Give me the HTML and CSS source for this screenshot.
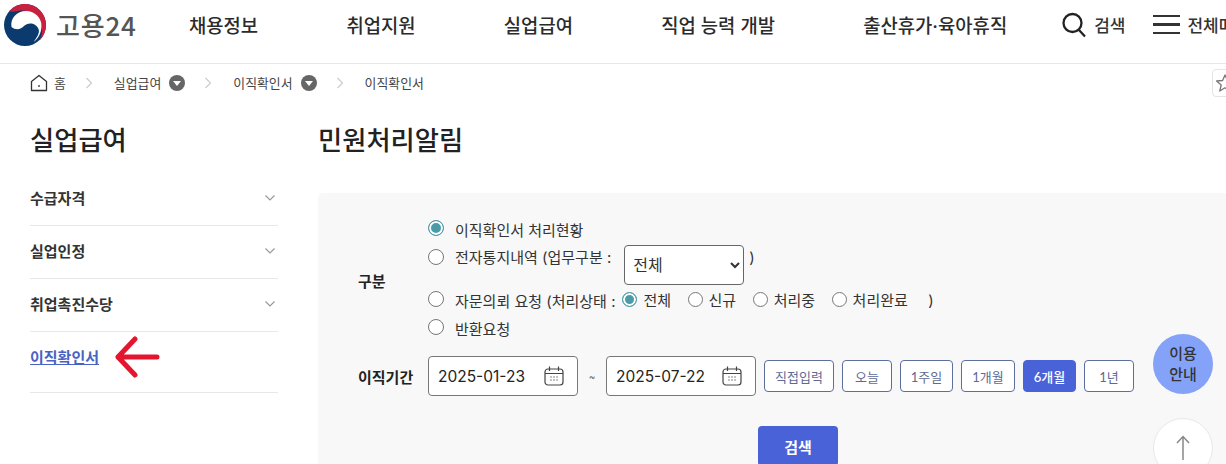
FILE: index.html
```html
<!DOCTYPE html>
<html lang="ko">
<head>
    <title>고용24</title>
    <link rel="stylesheet" href="styles.css">
</head>
<body>
    <div class="page">
        <header class="top">
            <a class="logo">
                <svg width="44" height="44" viewBox="0 0 44 44">
                    <circle cx="22" cy="22" r="21" fill="#0b3a6f"/>
                    <path d="M6.500 8C10.500 3.500 16 1 22 1C33.600 1 43 10.400 43 22C43 28 40.500 33.500 36.500 37.500C39.500 32 40 25.500 37.500 19.500C34 11.500 26 7 18 7.500C13.500 8 9.500 9.500 6.500 8Z" fill="#c8213f"/>
                    <path d="M8.500 24C7 15 14 8 23 8C32 8 38.500 15 38.500 23C38.500 30 35 36 30.500 39C34 34 37 30 35.500 26C33.500 20 25 18.500 21 23C18 26.500 13 27.500 8.500 24Z" fill="#fff"/>
                </svg>
                <span class="logo-text">고용24</span>
            </a>
            <nav class="gnb">
                <a>채용정보</a>
                <a>취업지원</a>
                <a>실업급여</a>
                <a>직업 능력 개발</a>
                <a>출산휴가·육아휴직</a>
            </nav>
            <div class="util">
                <a class="util-search">
                    <svg width="24" height="26" viewBox="0 0 24 26" fill="none" stroke="#222" stroke-width="2.300">
                        <circle cx="10.500" cy="11" r="9"/>
                        <path d="M17 18L23 24.500"/>
                    </svg>
                    검색
                </a>
                <a class="util-menu">
                    <span class="burger"><i></i><i></i><i></i></span>
                    전체메뉴
                </a>
            </div>
        </header>

        <div class="crumbs">
            <svg width="18" height="18" viewBox="0 0 18 18" fill="none" stroke="#333" stroke-width="1.300">
                <path d="M1.500 7.500L9 1.500L16.500 7.500V16.500H1.500Z" stroke-linejoin="round"/>
                <path d="M9 11V13"/>
            </svg>
            <span class="crumb crumb-home">홈</span>
            <svg class="chev" width="8" height="12" viewBox="0 0 8 12" fill="none" stroke="#ccc" stroke-width="1.200"><path d="M1.500 1L6.500 6L1.500 11"/></svg>
            <span class="crumb">실업급여</span>
            <span class="dot"></span>
            <svg class="chev" width="8" height="12" viewBox="0 0 8 12" fill="none" stroke="#ccc" stroke-width="1.200"><path d="M1.500 1L6.500 6L1.500 11"/></svg>
            <span class="crumb">이직확인서</span>
            <span class="dot"></span>
            <svg class="chev" width="8" height="12" viewBox="0 0 8 12" fill="none" stroke="#ccc" stroke-width="1.200"><path d="M1.500 1L6.500 6L1.500 11"/></svg>
            <span class="crumb">이직확인서</span>
            <span class="fav">
                <svg width="20" height="20" viewBox="0 0 20 20" fill="none" stroke="#777" stroke-width="1.300"><path d="M10 2L12.400 7.500L18.400 8L13.800 12L15.200 18L10 14.800L4.800 18L6.200 12L1.600 8L7.600 7.500Z" stroke-linejoin="round"/></svg>
            </span>
        </div>

        <div class="content">
            <aside class="side">
                <h2>실업급여</h2>
                <ul class="side-list">
                    <li>수급자격<svg width="10" height="6" viewBox="0 0 10 6" fill="none" stroke="#999" stroke-width="1.200"><path d="M.5 .5L5 5L9.500 .5"/></svg></li>
                    <li>실업인정<svg width="10" height="6" viewBox="0 0 10 6" fill="none" stroke="#999" stroke-width="1.200"><path d="M.5 .5L5 5L9.500 .5"/></svg></li>
                    <li>취업촉진수당<svg width="10" height="6" viewBox="0 0 10 6" fill="none" stroke="#999" stroke-width="1.200"><path d="M.5 .5L5 5L9.500 .5"/></svg></li>
                    <li class="side-on">
                        <a>이직확인서</a>
                        <svg class="red-arrow" width="46" height="42" viewBox="0 0 46 42" fill="none" stroke="#e3152f" stroke-width="5" stroke-linecap="round" stroke-linejoin="round">
                            <path d="M43 21H4M21 3L4 21L21 39"/>
                        </svg>
                    </li>
                </ul>
            </aside>

            <main class="main">
                <h1>민원처리알림</h1>
                <form class="panel">
                    <div class="row row-type">
                        <div class="label">구분</div>
                        <div class="opts">
                            <div class="opt opt-1"><i class="radio on"></i>이직확인서 처리현황</div>
                            <div class="opt opt-2">
                                <i class="radio"></i><span class="opt-text">전자통지내역 (업무구분 :</span>
                                <select class="sel"><option>전체</option></select>
                                <span class="paren">)</span>
                            </div>
                            <div class="opt opt-3">
                                <i class="radio"></i><span class="opt-tight">자문의뢰 요청 (처리상태 :</span>
                                <i class="radio small on"></i><span class="sub">전체</span>
                                <i class="radio small"></i><span class="sub">신규</span>
                                <i class="radio small"></i><span class="sub">처리중</span>
                                <i class="radio small"></i><span class="sub">처리완료</span>
                                <span class="paren-2">)</span>
                            </div>
                            <div class="opt opt-4"><i class="radio"></i>반환요청</div>
                        </div>
                    </div>
                    <div class="row row-date">
                        <div class="label label-date">이직기간</div>
                        <div class="date">2025-01-23
                            <svg width="20" height="20" viewBox="0 0 20 20" fill="none" stroke="#444" stroke-width="1.200"><rect x="1" y="3" width="18" height="16" rx="3"/><path d="M1 7.500H19M5.500 .5V5M14.500 .5V5"/><path d="M6 11H8M9 11H11M12 11H14M6 14H8M9 14H11M12 14H14" stroke="#888"/></svg>
                        </div>
                        <span class="tilde">~</span>
                        <div class="date">2025-07-22
                            <svg width="20" height="20" viewBox="0 0 20 20" fill="none" stroke="#444" stroke-width="1.200"><rect x="1" y="3" width="18" height="16" rx="3"/><path d="M1 7.500H19M5.500 .5V5M14.500 .5V5"/><path d="M6 11H8M9 11H11M12 11H14M6 14H8M9 14H11M12 14H14" stroke="#888"/></svg>
                        </div>
                        <div class="quick">
                            <button type="button" class="w70">직접입력</button>
                            <button type="button" class="w50">오늘</button>
                            <button type="button" class="w53">1주일</button>
                            <button type="button" class="w54">1개월</button>
                            <button type="button" class="w53 active">6개월</button>
                            <button type="button" class="w50">1년</button>
                        </div>
                    </div>
                    <div class="row-btn"><button type="button" class="btn-search">검색</button></div>
                </form>
            </main>
        </div>

        <a class="float-guide">이용<br>안내</a>
        <a class="float-top">
            <svg width="14" height="26" viewBox="0 0 14 26" fill="none" stroke="#888" stroke-width="1.500"><path d="M7 25V1.500M1 8L7 1.500L13 8"/></svg>
        </a>
    </div>
</body>
</html>
```

FILE: styles.css
```css
* {
    box-sizing: border-box;
}

html, body {
    margin: 0;
    height: 464px;
    overflow: hidden;
    background-color: #fff;
}

body {
    font-family: Inter, "Noto Sans CJK KR", "Noto Sans", sans-serif;
    color: #222;
}

.page {
    position: relative;
    width: 1226px;
    height: 464px;
    overflow: hidden;
}

/* header */
.top {
    display: flex;
    align-items: center;
    height: 64px;
    padding: 0 0 14px 3px;
    border-bottom: 1px solid #e8e8e8;
    white-space: nowrap;
}

.logo {
    display: flex;
    align-items: center;
    width: 186px;
    flex: none;
}

.logo-text {
    margin-left: 9px;
    font-family: "Noto Sans CJK KR", sans-serif;
    font-size: 26px;
    font-weight: 500;
    color: #555;
    letter-spacing: 0.8px;
}

.gnb {
    display: flex;
    gap: 88.300px;
    flex: none;
}

.gnb a {
    font-size: 18.800px;
    font-weight: 500;
    color: #2b2b2b;
}

.util {
    display: flex;
    align-items: center;
    margin-left: 55px;
    flex: none;
    font-size: 17px;
    font-weight: 500;
    color: #333;
}

.util-search {
    display: flex;
    align-items: center;
    gap: 8px;
}

.util-menu {
    display: flex;
    align-items: center;
    gap: 7px;
    margin-left: 28px;
}

.burger {
    display: flex;
    flex-direction: column;
    gap: 6px;
    width: 27px;
}

.burger i {
    display: block;
    height: 2.500px;
    background-color: #333;
}

/* breadcrumb */
.crumbs {
    display: flex;
    align-items: center;
    height: 39px;
    padding: 0 0 2px 30px;
    font-size: 12.900px;
    color: #444;
    white-space: nowrap;
    position: relative;
}

.crumb-home {
    margin-left: 6px;
}

.chev {
    margin: 0 21px 0 19px;
}

.dot {
    width: 16px;
    height: 16px;
    margin-left: 8px;
    border-radius: 50%;
    background-color: #666;
    position: relative;
}

.dot::after {
    content: "";
    position: absolute;
    left: 4px;
    top: 6px;
    border: 4px solid transparent;
    border-top: 5px solid #fff;
    border-bottom: 0;
}

.fav {
    position: absolute;
    left: 1212px;
    top: 5px;
    width: 30px;
    height: 28px;
    padding: 3px 0 0 2px;
    border: 1px solid #e4e4e4;
    border-radius: 4px;
}

/* body */
.content {
    display: flex;
}

.side {
    width: 248px;
    margin-left: 30px;
    flex: none;
}

.side h2 {
    margin: 0;
    padding-top: 18px;
    height: 70px;
    font-size: 26.300px;
    line-height: 40px;
    font-weight: 500;
    color: #222;
}

.side-list {
    list-style: none;
    margin: 0;
    padding: 0;
}

.side-list li {
    display: flex;
    align-items: center;
    justify-content: space-between;
    height: 53px;
    padding: 0 3px 3px 0;
    border-bottom: 1px solid #e8e8e8;
    font-size: 15px;
    font-weight: 700;
    color: #333;
}

.side-list .side-on {
    height: 61px;
    padding-bottom: 12px;
    justify-content: flex-start;
    position: relative;
}

.side-on a {
    color: #4a62c4;
    text-decoration: underline;
}

.red-arrow {
    position: absolute;
    left: 84px;
    top: 4px;
}

.main {
    flex: 1;
    margin-left: 40px;
    min-width: 0;
}

.main h1 {
    margin: 0;
    padding-top: 18px;
    height: 90px;
    font-size: 26.300px;
    line-height: 40px;
    font-weight: 500;
    color: #222;
}

.panel {
    background-color: #f8f8f8;
    border-radius: 5px 0 0 0;
    height: 280px;
    padding: 24px 0 0 40px;
    font-size: 15px;
    color: #333;
}

.row {
    display: flex;
    align-items: center;
}

.label {
    width: 70px;
    font-weight: 700;
    font-size: 15px;
    color: #222;
    flex: none;
}

.opts {
    flex: 1;
}

.opt {
    display: flex;
    align-items: center;
    white-space: nowrap;
}

.opt-1 {
    height: 24px;
}

.opt-2 {
    height: 46px;
    align-items: flex-start;
    padding-top: 4px;
}

.opt-2 .radio {
    top: 4px;
}

.opt-2 .opt-text {
    position: relative;
    top: 1px;
}

.opt-3 {
    height: 26px;
}

.opt-4 {
    height: 30px;
}

.radio {
    display: block;
    width: 16px;
    height: 16px;
    margin-right: 11px;
    border: 1px solid #777;
    border-radius: 50%;
    background-color: #fff;
    flex: none;
    position: relative;
    top: -1px;
}

.radio.on {
    border-color: #4a9aa8;
    box-shadow: inset 0 0 0 2px #fff;
    background-color: #4a9aa8;
}

.radio.small {
    width: 15px;
    height: 15px;
    margin-right: 6px;
}

.opt-tight {
    margin-right: 7px;
}

.sub {
    margin-right: 16.500px;
    position: relative;
    top: -1px;
}

.sel {
    width: 120px;
    height: 40px;
    margin-left: 13px;
    padding-left: 4px;
    border: 1px solid #666;
    border-radius: 4px;
    background-color: #fff;
    font-family: inherit;
    font-size: 16px;
    color: #333;
}

.paren {
    margin-left: 5px;
    position: relative;
    top: 3px;
}

.paren-2 {
    margin-left: 4px;
}

.row-date {
    margin-top: 13px;
}

.date {
    display: flex;
    align-items: center;
    justify-content: space-between;
    width: 150px;
    height: 40px;
    padding: 0 13px 0 9px;
    border: 1px solid #777;
    border-radius: 4px;
    background-color: #fff;
    font-size: 15.500px;
    color: #222;
    flex: none;
}

.tilde {
    width: 28px;
    text-align: center;
    font-size: 10px;
    color: #666;
    flex: none;
}

.quick {
    display: flex;
    gap: 8px;
    margin-left: 8px;
}

.quick button {
    height: 32px;
    padding: 0;
    border: 1px solid #5d6f9e;
    border-radius: 4px;
    background-color: #fff;
    font-family: Lato, "Noto Sans CJK KR", sans-serif;
    font-size: 13px;
    color: #5d6a94;
}

.quick .w70 {
    width: 70px;
}

.quick .w50 {
    width: 50px;
}

.quick .w53 {
    width: 53px;
}

.quick .w54 {
    width: 54px;
}

.quick .active {
    background-color: #4a62d8;
    border-color: #4a62d8;
    color: #fff;
    font-weight: 500;
}

.row-btn {
    margin-top: 30px;
    padding-left: 400px;
}

.btn-search {
    width: 80px;
    height: 40px;
    border: none;
    border-radius: 4px;
    background-color: #4a62d8;
    font-family: inherit;
    font-size: 15px;
    font-weight: 700;
    color: #fff;
}

/* floating buttons */
.float-guide {
    position: absolute;
    left: 1153px;
    top: 334px;
    width: 60px;
    height: 60px;
    padding-top: 9px;
    border-radius: 50%;
    background-color: #83a2f8;
    text-align: center;
    font-size: 15px;
    font-weight: 500;
    line-height: 21px;
    color: #333;
}

.float-top {
    position: absolute;
    left: 1153px;
    top: 418px;
    width: 60px;
    height: 60px;
    padding-top: 16px;
    border: 1px solid #e8e8e8;
    border-radius: 50%;
    background-color: #fff;
    text-align: center;
}
```
